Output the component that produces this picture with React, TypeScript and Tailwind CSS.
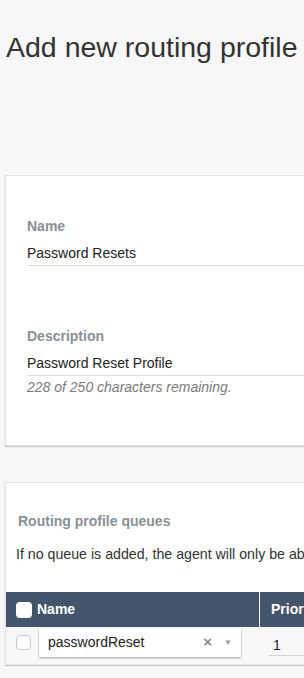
import type { ReactElement } from "react";

const font = { fontFamily: '"Liberation Sans", Arial, sans-serif' };

function Field({ label, value, help }: { label: string; value: string; help?: string }) {
  return (
    <div>
      <div className="text-[14px] leading-[20px] font-bold text-[#879196]">{label}</div>
      <div className="mt-[7px] border-b border-[#dcdcdc] pb-[2px] text-[14px] leading-[20px] text-[#222]">
        {value}
      </div>
      {help && (
        <div className="mt-[1px] text-[14px] leading-[20px] italic text-[#7b7b7b]">{help}</div>
      )}
    </div>
  );
}

function QueuesTable() {
  return (
    <div className="mt-[28px]">
      <div className="flex h-[35px] bg-[#44546a] text-white">
        <div className="flex w-[253px] items-center gap-[5px] pl-[10px]">
          <span className="h-[16px] w-[16px] rounded-[4px] bg-white" />
          <span className="text-[14px] font-bold">Name</span>
        </div>
        <div className="w-px bg-white" />
        <div className="flex items-center pl-[11px] text-[14px] font-bold">Priority</div>
      </div>
      <div className="flex h-[37px] bg-[#f8f8f8]">
        <div className="flex w-[253px] items-start">
          <span className="ml-[10px] mt-[8px] h-[15px] w-[15px] rounded-[4px] border border-[#c9c9c9] bg-white" />
          <div className="ml-[8px] mt-[1px] flex h-[29px] w-[202px] items-center bg-white pl-[9px] pr-[9px] shadow-[0_1px_2px_rgba(0,0,0,0.35)]">
            <span className="flex-1 text-[14px] text-[#222]">passwordReset</span>
            <span className="text-[15px] font-bold text-[#8a8a8a]">×</span>
            <span className="ml-[12px] text-[8px] text-[#999]">▼</span>
          </div>
        </div>
        <div className="ml-[10px] mt-[8px] h-[21px] flex-1 border-b border-[#d5d5d5] pl-[4px] text-[14px] leading-[20px] text-[#222]">
          1
        </div>
      </div>
    </div>
  );
}

function App(): ReactElement {
  return (
    <div className="h-[678px] w-[304px] overflow-hidden bg-[#f7f7f7]" style={font}>
      <h1 className="ml-[6px] pt-[33px] text-[28.5px] leading-[28px] text-[#333] whitespace-nowrap">
        Add new routing profile
      </h1>

      <section className="ml-[5px] mt-[114px] w-[340px] border border-[#e4e4e4] bg-white pl-[21px] pr-[20px] pt-[40px] pb-[48px] shadow-[0_1px_1px_rgba(0,0,0,0.18)]">
        <Field label="Name" value="Password Resets" />
        <div className="h-[60px]" />
        <Field label="Description" value="Password Reset Profile" help="228 of 250 characters remaining." />
      </section>

      <section className="ml-[5px] mt-[36px] w-[340px] border border-[#e4e4e4] bg-white pt-[28px] shadow-[0_1px_1px_rgba(0,0,0,0.18)]">
        <h2 className="pl-[12px] text-[14px] leading-[20px] font-bold text-[#879196]">Routing profile queues</h2>
        <p className="mt-[13px] pl-[10px] text-[14.2px] leading-[20px] text-[#333] whitespace-nowrap">
          If no queue is added, the agent will only be able to handle callbacks
        </p>
        <QueuesTable />
      </section>
    </div>
  );
}

export default App;
